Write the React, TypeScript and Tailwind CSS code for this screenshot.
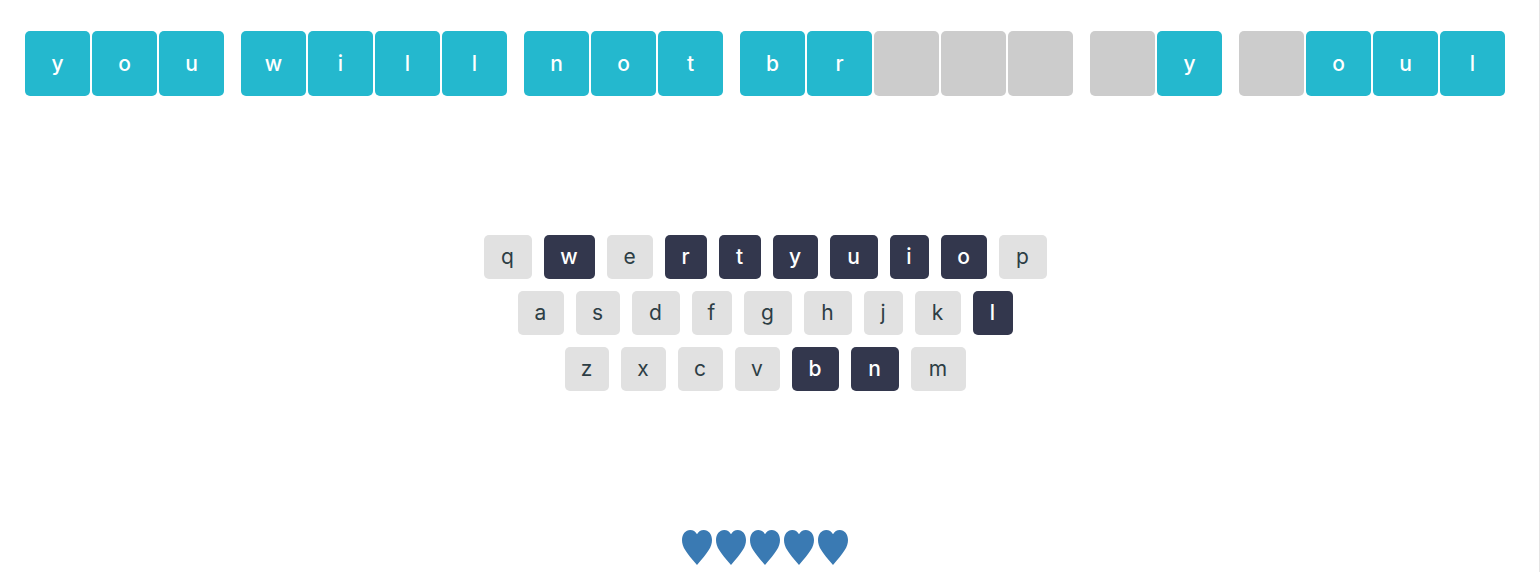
const words: (string | null)[][] = [
  ["y", "o", "u"],
  ["w", "i", "l", "l"],
  ["n", "o", "t"],
  ["b", "r", null, null, null],
  [null, "y"],
  [null, "o", "u", "l"],
];

const rows = ["qwertyuiop", "asdfghjkl", "zxcvbnm"];
const used = new Set("wrtyuiolbn");

const keyWidths: Record<string, string> = {
  i: "w-[39px]", j: "w-[39px]",
  f: "w-10", l: "w-10",
  r: "w-[42px]", t: "w-[42px]",
  s: "w-11", z: "w-11",
  y: "w-[45px]", x: "w-[45px]", c: "w-[45px]", v: "w-[45px]",
  e: "w-[46px]", o: "w-[46px]", a: "w-[46px]", k: "w-[46px]",
  b: "w-[47px]",
  q: "w-12", u: "w-12", p: "w-12", d: "w-12", g: "w-12", h: "w-12", n: "w-12",
  w: "w-[51px]", m: "w-[55px]",
};

function Tile({ letter }: { letter: string | null }) {
  return (
    <span
      className={`flex h-[65px] w-[65px] items-center justify-center rounded-[5px] font-medium text-white ${
        letter ? "bg-[#24b8ce]" : "bg-[#cccccc]"
      }`}
    >
      {letter}
    </span>
  );
}

function Key({ letter }: { letter: string }) {
  return (
    <button
      type="button"
      className={`flex h-11 items-center justify-center rounded-[5px] ${keyWidths[letter]} ${
        used.has(letter) ? "bg-[#33374d] font-medium text-white" : "bg-[#e1e1e1] text-[#2d3e45]"
      }`}
    >
      {letter}
    </button>
  );
}

function Heart() {
  return (
    <svg viewBox="0 0 30 35" className="h-[35px] w-[30px]" fill="#3a7ab3" aria-hidden="true">
      <path d="M15 4.2C13.6 1.5 11.1 0 8.2 0C3.5 0 0 4.2 0 10C0 17 4 22.3 15 35C26 22.3 30 17 30 10C30 4.2 26.5 0 21.8 0C18.9 0 16.4 1.5 15 4.2Z" />
    </svg>
  );
}

export default function App() {
  return (
    <main className="flex min-h-screen flex-col items-center border-r border-[#e5e5e5] bg-white pt-[31px] pr-[9px] pb-[7px] font-['Inter',sans-serif] text-[21px] leading-7 font-normal">
      <div className="flex flex-wrap justify-center gap-x-[17px] gap-y-2">
        {words.map((word, i) => (
          <div key={i} className="flex gap-0.5">
            {word.map((letter, j) => (
              <Tile key={j} letter={letter} />
            ))}
          </div>
        ))}
      </div>

      <div className="mt-[139px] flex flex-col gap-3">
        {rows.map((row) => (
          <div key={row} className="flex flex-wrap justify-center gap-3">
            {row.split("").map((letter) => (
              <Key key={letter} letter={letter} />
            ))}
          </div>
        ))}
      </div>

      <div role="img" aria-label="5" className="mt-[139px] flex gap-1">
        {[0, 1, 2, 3, 4].map((i) => (
          <Heart key={i} />
        ))}
      </div>
    </main>
  );
}
